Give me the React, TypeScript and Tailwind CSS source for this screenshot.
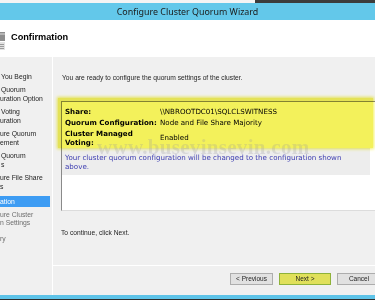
export default function App() {
  const nav = "font-['Liberation_Sans',Arial,sans-serif] text-[6.8px] leading-[8.5px] text-[#1e1e1e]";
  return (
    <div className="w-[375px] h-[300px] overflow-hidden bg-[#f0f0f0] flex flex-col font-['Liberation_Sans',Arial,sans-serif]">
      <div className="h-[3px] flex shrink-0">
        <div className="w-[255px] bg-[#f4f4f4]" />
        <div className="flex-1 bg-[#3c3c3c]" />
      </div>
      <div className="h-[17px] shrink-0 bg-[#63c8ea] flex items-center justify-center text-[8.9px] text-[#1b1b1b] font-['Noto_Sans',sans-serif] pt-[1px]">
        Configure Cluster Quorum Wizard
      </div>
      <div className="h-[37px] shrink-0 bg-white flex items-start">
        <svg width="6" height="19" viewBox="0 0 6 19" className="mt-[12px]">
          <rect x="0" y="0" width="5" height="9" fill="#8e8e8e" />
          <rect x="0" y="1" width="5" height="2" fill="#b5b5b5" />
          <rect x="0" y="10" width="5" height="8" fill="#e2e2e2" />
          <rect x="0" y="12" width="4" height="1" fill="#9a9a9a" />
          <rect x="0" y="14" width="4" height="1" fill="#9a9a9a" />
          <rect x="0" y="16" width="4" height="1" fill="#9a9a9a" />
        </svg>
        <div className="ml-[5px] mt-[11px] text-[9.2px] leading-[12px] font-bold text-black">Confirmation</div>
      </div>
      <div className="flex flex-1 min-h-0">
        <div className={`w-[53px] shrink-0 border-r border-white pt-[15.75px] flex flex-col gap-[5px] ${nav}`}>
          <div className="pl-[1px]">You Begin</div>
          <div className="pl-[1px]">Quorum<br /><span className="-ml-[1px]">uration Option</span></div>
          <div className="pl-[1px]">Voting<br /><span className="-ml-[1px]">uration</span></div>
          <div>ure Quorum<br />ement</div>
          <div className="pl-[1px]">Quorum<br />s</div>
          <div>ure File Share<br />s</div>
          <div className="w-[50px] h-[11px] leading-[11px] bg-[#3d9cf3] text-white -mt-[0.5px]">ation</div>
          <div className="text-[#6e6e6e] -mt-[1px]">ure Cluster<br />n Settings</div>
          <div className="text-[#6e6e6e] mt-[2px]">ry</div>
        </div>
        <div className="flex-1 flex flex-col relative min-w-0">
          <div className="pl-[9px] pt-[15.5px] text-[6.7px] leading-[9px] text-[#1e1e1e] whitespace-nowrap">
            You are ready to configure the quorum settings of the cluster.
          </div>
          <div className="ml-[8px] mt-[19.5px] w-[330px] h-[110px] shrink-0 bg-white border-l border-t border-[#8a8a8a] border-b border-b-[#dcdcdc] font-['DejaVu_Sans',Verdana,sans-serif] text-[7.1px] leading-[9px] text-black">
            <div className="pt-[4.5px] pl-[3px] grid grid-cols-[95px_1fr] gap-y-[2px]">
              <div className="font-bold">Share:</div>
              <div className="self-center">\\NBROOTDC01\SQLCLSWITNESS</div>
              <div className="font-bold whitespace-nowrap">Quorum Configuration:</div>
              <div className="self-center">Node and File Share Majority</div>
              <div className="font-bold">Cluster Managed<br />Voting:</div>
              <div className="self-center">Enabled</div>
            </div>
            <div className="mt-[1.5px] w-[308px] bg-[#ededed] pl-[3px] pr-[6px] py-[4.5px] text-[#3a3ab0]">
              Your cluster quorum configuration will be changed to the configuration shown above.
            </div>
          </div>
          <div className="pl-[8px] mt-[16.5px] text-[6.7px] leading-[9px] text-[#1e1e1e]">To continue, click Next.</div>
          <div className="flex-1" />
          <div className="h-px bg-white shrink-0" />
          <div className="h-[29px] shrink-0 flex justify-end items-start pt-[7px] gap-[6px] -mr-[6px] text-[6.5px]">
            <div className="w-[43px] h-[12px] flex items-center justify-center bg-[#e1e1e1] border border-[#adadad] text-[#1e1e1e]">&lt; Previous</div>
            <div className="w-[52px] h-[12px] flex items-center justify-center bg-[#e0e05a] border border-[#8fb23a] text-[#1e1e1e]">Next &gt;</div>
            <div className="w-[44px] h-[12px] flex items-center justify-center bg-[#e1e1e1] border border-[#adadad] text-[#1e1e1e]">Cancel</div>
          </div>
          <div className="absolute left-[5px] top-[41px] w-[315px] h-[50px] bg-[#f3f15b] mix-blend-multiply shadow-[0_0_3px_1px_#f3f15b] pointer-events-none" />
          <div className="absolute left-[44px] top-[80px] text-[21px] leading-[21px] font-bold font-['Liberation_Serif',serif] text-[#9a9a9a] opacity-25 whitespace-nowrap pointer-events-none tracking-[0.3px]">
            www.busevinsevin.com
          </div>
        </div>
      </div>
      <div className="h-[4px] shrink-0 bg-[#5ec3e8]" />
      <div className="h-px shrink-0 bg-[#2c2c2c]" />
    </div>
  );
}
